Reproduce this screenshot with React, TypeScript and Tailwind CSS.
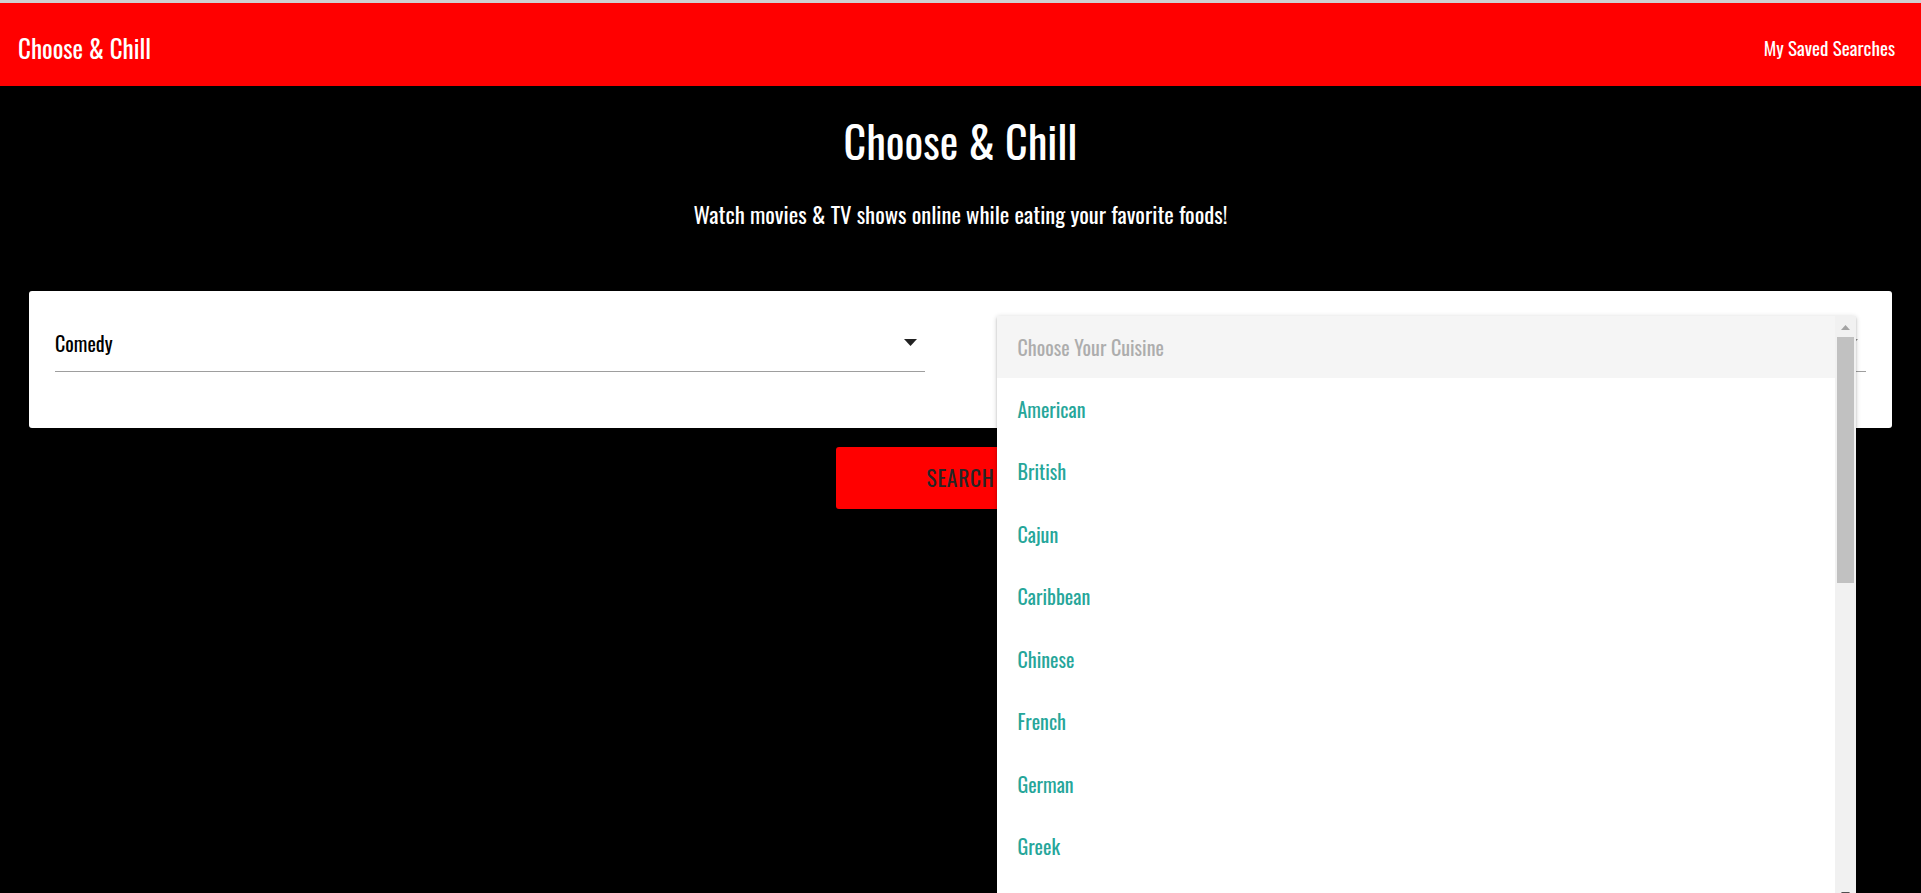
import { useState } from "react";

const cuisines = [
  "American",
  "British",
  "Cajun",
  "Caribbean",
  "Chinese",
  "French",
  "German",
  "Greek",
];

export default function App() {
  const [genre] = useState("Comedy");

  return (
    <div className="h-[893px] overflow-hidden bg-black border-t-[3px] border-[#d0d0d0] font-['Oswald','Liberation_Sans_Narrow','Arial_Narrow','DejaVu_Sans_Condensed','Liberation_Sans',sans-serif]">
      {/* navbar */}
      <nav className="h-[83px] bg-[#ff0000] flex items-center justify-between pl-[18px] pr-[26px] pt-[6px]">
        <a href="#" className="text-white text-[25px] leading-none">Choose &amp; Chill</a>
        <a href="#" className="text-white text-[19px] leading-none">My Saved Searches</a>
      </nav>

      {/* hero */}
      <div className="flex flex-col items-center">
        <h1 className="mt-[33px] text-white text-[44px] leading-none">Choose &amp; Chill</h1>
        <p className="mt-[40px] text-white text-[22.6px] leading-none">Watch movies &amp; TV shows online while eating your favorite foods!</p>
      </div>

      {/* search card */}
      <div className="mt-[65px] mx-[29px] bg-white rounded-[3px] px-[26px] pt-[42px] pb-[56px] grid grid-cols-2 gap-x-[72px]">
        <div>
          <div className="flex items-center justify-between pr-[8px]">
            <span className="text-[20px] leading-none text-black">{genre}</span>
            <svg width="13" height="7" viewBox="0 0 13 7">
              <path d="M0 0 L13 0 L6.5 7 Z" fill="#222" />
            </svg>
          </div>
          <div className="mt-[18px] h-px bg-[#9e9e9e]" />
        </div>

        <div className="relative">
          <div className="h-[20px] flex items-center justify-end pr-[8px]">
            <svg width="13" height="7" viewBox="0 0 13 7">
              <path d="M0 0 L13 0 L6.5 7 Z" fill="#8a8a8a" />
            </svg>
          </div>
          <div className="mt-[18px] h-px bg-[#9e9e9e]" />

          {/* open cuisine dropdown */}
          <div className="absolute left-0 top-[-17px] w-[859px] h-[590px] bg-white flex shadow-[0_2px_2px_0_rgba(0,0,0,0.14),0_3px_1px_-2px_rgba(0,0,0,0.12),0_1px_5px_0_rgba(0,0,0,0.2)]">
            <ul className="flex-1">
              <li className="h-[62px] bg-[#f5f5f5] px-[21px] flex items-center text-[20px] leading-none text-[#adadad]">Choose Your Cuisine</li>
              {cuisines.map((c) => (
                <li key={c} className="h-[62.5px] px-[21px] flex items-center text-[20px] leading-none text-[#26a69a]">{c}</li>
              ))}
            </ul>
            <div className="w-[21px] bg-[#f1f1f1] flex flex-col items-center">
              <svg width="9" height="5" viewBox="0 0 9 5" className="mt-[9px]">
                <path d="M0 5 L4.5 0 L9 5 Z" fill="#a3a3a3" />
              </svg>
              <div className="mt-[7px] w-[17px] h-[246px] bg-[#c1c1c1]" />
              <div className="flex-1" />
              <svg width="9" height="5" viewBox="0 0 9 5" className="mb-[9px]">
                <path d="M0 0 L9 0 L4.5 5 Z" fill="#505050" />
              </svg>
            </div>
          </div>
        </div>
      </div>

      <div className="mt-[19px] flex justify-center">
        <button className="w-[249px] h-[62px] rounded-[3px] bg-[#ff0000] text-[#262626] text-[21.5px] uppercase tracking-[0.7px] leading-none">Search</button>
      </div>
    </div>
  );
}
